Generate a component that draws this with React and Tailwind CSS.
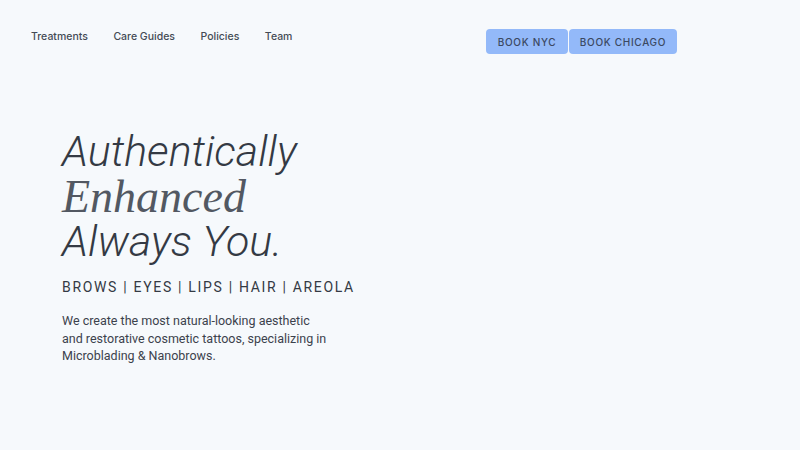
import React from 'react';

const navLinks = ['Treatments', 'Care Guides', 'Policies', 'Team'];

const App = () => {
  return (
    <div className="min-h-screen w-full bg-[#f6f9fc] text-[#343a44]" style={{ fontFamily: 'Roboto, "Noto Sans", sans-serif' }}>
      <header className="flex items-start h-[80px]">
        <nav className="flex items-center gap-[25.5px] w-[486px] pl-[31px] pt-[30px] text-[10.5px] font-medium text-[#444b55]" style={{ fontFamily: 'Inter, sans-serif' }}>
          {navLinks.map((link) => (
            <a key={link} href="#" className="leading-[13px]">{link}</a>
          ))}
        </nav>
        <div className="flex gap-px mt-[29px]" style={{ fontFamily: 'Inter, sans-serif' }}>
          <a href="#" className="flex items-center justify-center h-[25px] w-[82px] rounded-[4px] bg-[#93b9f9] pt-px text-[10px] font-medium tracking-[0.07em] text-[#3b4861]">BOOK NYC</a>
          <a href="#" className="flex items-center justify-center h-[25px] w-[108px] rounded-[4px] bg-[#93b9f9] pt-px text-[10px] font-medium tracking-[0.07em] text-[#3b4861]">BOOK CHICAGO</a>
        </div>
      </header>

      <section className="pl-[62px] pt-[49px]">
        <h1 className="text-[43px] font-light italic leading-[45px] text-[#343a44]">
          <span className="block">Authentically</span>
          <span className="block font-normal text-[46px] text-[#525862]" style={{ fontFamily: '"Liberation Serif", "DejaVu Serif", serif' }}>Enhanced</span>
          <span className="block">Always You.</span>
        </h1>
        <p className="mt-[13px] text-[14px] tracking-[0.12em] text-[#343a44]">BROWS | EYES | LIPS | HAIR | AREOLA</p>
        <p className="mt-[14px] w-[268px] text-[12.5px] leading-[17.5px] text-[#3c424c]">
          We create the most natural-looking aesthetic and restorative cosmetic tattoos, specializing in Microblading &amp; Nanobrows.
        </p>
      </section>
    </div>
  );
};

export default App;
